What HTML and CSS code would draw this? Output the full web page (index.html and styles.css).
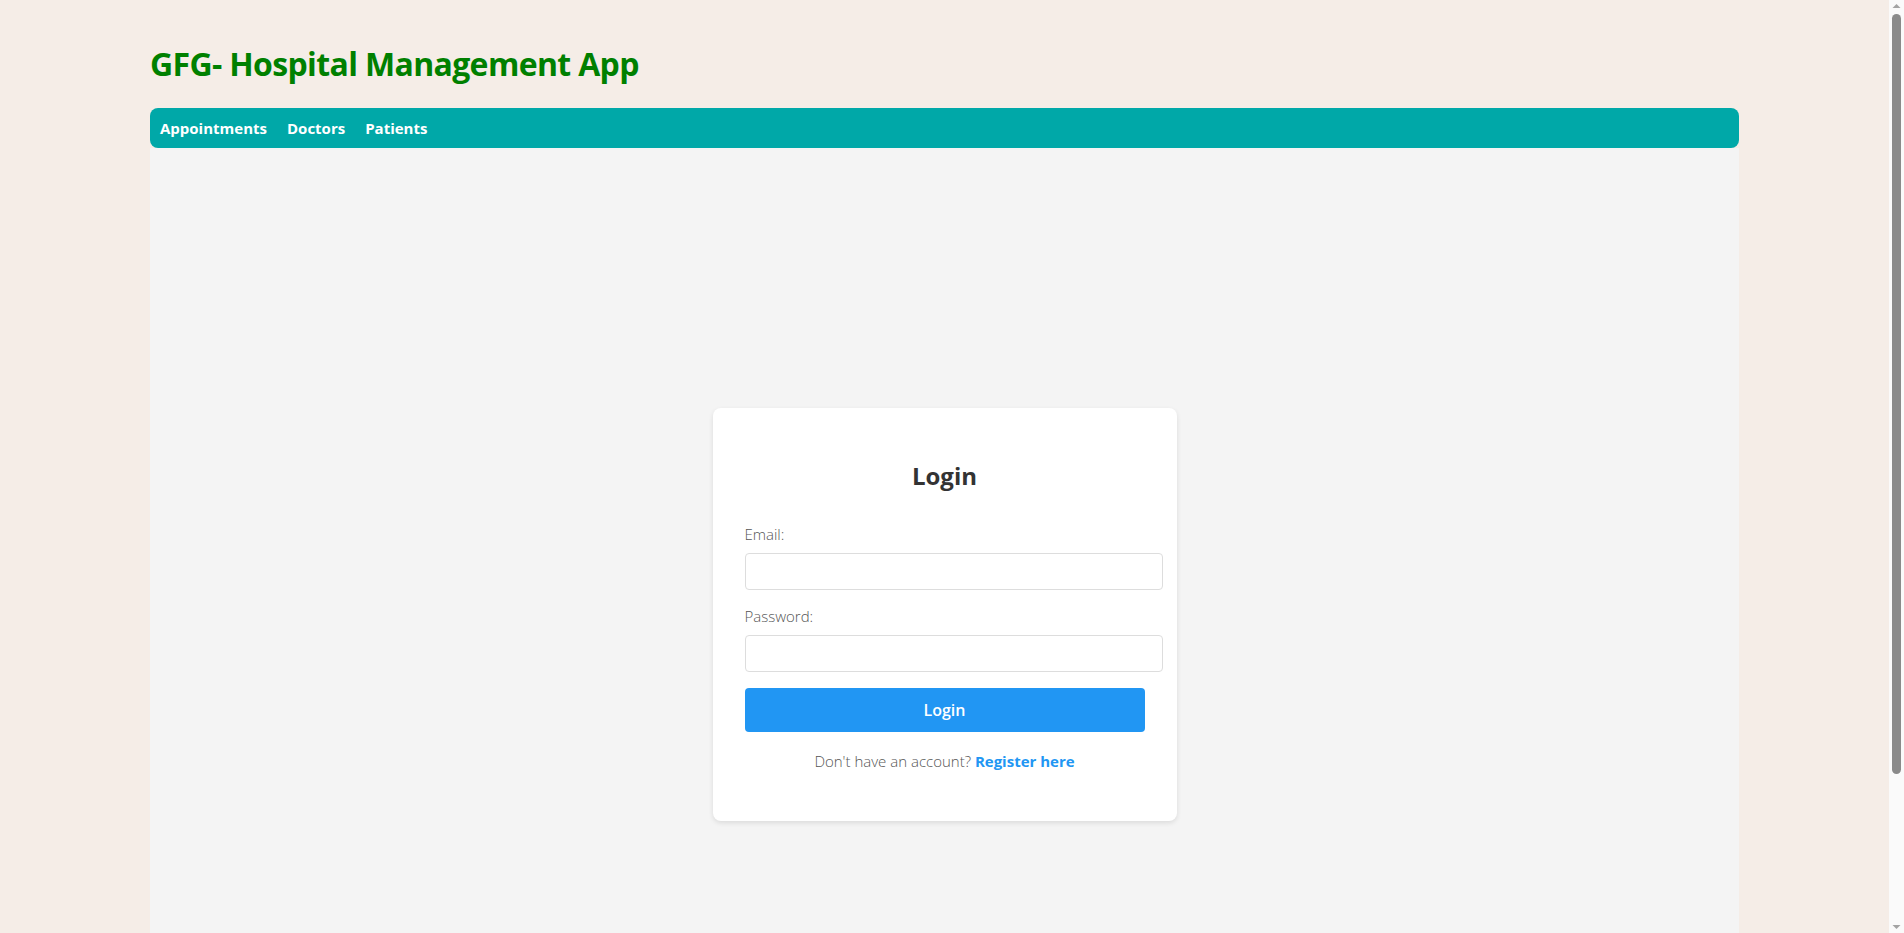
FILE: index.html
```html
<!DOCTYPE html>
<html lang="en">
<head>
<meta charset="utf-8">
<title>GFG- Hospital Management App</title>
<link rel="stylesheet" href="styles.css">
</head>
<body>
<div class="app">
  <header class="app-header">
    <h1 class="app-title">GFG- Hospital Management App</h1>
  </header>
  <nav class="main-nav">
    <a class="nav-link" href="#">Appointments</a>
    <a class="nav-link" href="#">Doctors</a>
    <a class="nav-link" href="#">Patients</a>
  </nav>
  <main class="main-area">
    <div class="login-card">
      <h2 class="login-title">Login</h2>
      <form class="login-form">
        <label class="field-label" for="email">Email:</label>
        <input class="field-input" id="email" type="email">
        <label class="field-label" for="password">Password:</label>
        <input class="field-input" id="password" type="password">
        <button class="login-button" type="button">Login</button>
      </form>
      <p class="register-text">Don't have an account? <a class="register-link" href="#">Register here</a></p>
    </div>
  </main>
</div>
<div class="fake-scrollbar" aria-hidden="true">
  <svg class="sb-arrow" width="15" height="12" viewBox="0 0 15 12"><path d="M3.5 8 L7.5 4 L11.5 8 Z" fill="#a3a3a3"/></svg>
  <div class="sb-thumb"></div>
  <div class="sb-rest"></div>
  <svg class="sb-arrow" width="15" height="12" viewBox="0 0 15 12"><path d="M3.5 4 L7.5 8 L11.5 4 Z" fill="#a3a3a3"/></svg>
</div>
</body>
</html>
```

FILE: styles.css
```css
html, body {
  margin: 0;
  padding: 0;
}

body {
  background: #f5ede7;
  font-family: "Open Sans", "Noto Sans", sans-serif;
  color: #333;
  padding-right: 15px;
}

.app {
  max-width: 1589px;
  margin: 0 auto;
  padding-bottom: 32px;
}

.app-header {
  padding-top: 44px;
}

.app-title {
  margin: 0 0 24px 0;
  font-size: 32px;
  line-height: 40px;
  font-weight: 700;
  color: #008000;
  letter-spacing: -0.65px;
}

.main-nav {
  display: flex;
  background: #00a8a8;
  border-radius: 8px;
  height: 40px;
}

.nav-link {
  display: block;
  padding: 0 10px;
  line-height: 40px;
  font-size: 15px;
  font-weight: 700;
  color: #fff;
  text-decoration: none;
}

.main-area {
  background: #f4f4f4;
  min-height: 100vh;
  display: flex;
  align-items: center;
  justify-content: center;
}

.login-card {
  width: 400px;
  padding: 32px;
  background: #fff;
  border-radius: 8px;
  box-shadow: 0 2px 5px rgba(0, 0, 0, 0.1);
}

.login-title {
  margin: 20px 0 32px 0;
  font-size: 24px;
  line-height: 32px;
  font-weight: 700;
  text-align: center;
  color: #333;
}

.login-form {
  display: flex;
  flex-direction: column;
  align-items: flex-start;
}

.field-label {
  display: block;
  font-size: 15px;
  line-height: 20px;
  font-weight: 300;
  color: #555;
  margin-bottom: 9px;
}

.field-input {
  display: block;
  box-sizing: content-box;
  width: 100%;
  height: 19px;
  padding: 8px;
  margin: 0 0 16px 0;
  border: 1px solid #ddd;
  border-radius: 4px;
  font-size: 16px;
  background: #fff;
}

.login-button {
  width: 400px;
  height: 44px;
  padding: 0;
  border: none;
  border-radius: 4px;
  background: #2196f3;
  color: #fff;
  font-family: "Open Sans", "Noto Sans", sans-serif;
  font-size: 16px;
  font-weight: 600;
}

.register-text {
  margin: 19px 0 18px 0;
  font-size: 15px;
  line-height: 20px;
  font-weight: 300;
  color: #555;
  text-align: center;
}

.register-link {
  color: #2196f3;
  font-weight: 700;
  text-decoration: none;
}

/* overlay imitation of the browser scrollbar */
.fake-scrollbar {
  position: fixed;
  top: 0;
  right: 0;
  width: 15px;
  height: 100vh;
  background: #fafafa;
  display: flex;
  flex-direction: column;
  align-items: center;
}

.sb-arrow {
  display: block;
  flex: none;
}

.sb-thumb {
  flex: none;
  width: 9px;
  height: 760px;
  margin-top: 2px;
  border-radius: 5px;
  background: #8a8a8a;
}

.sb-rest {
  flex: 1;
}
```
